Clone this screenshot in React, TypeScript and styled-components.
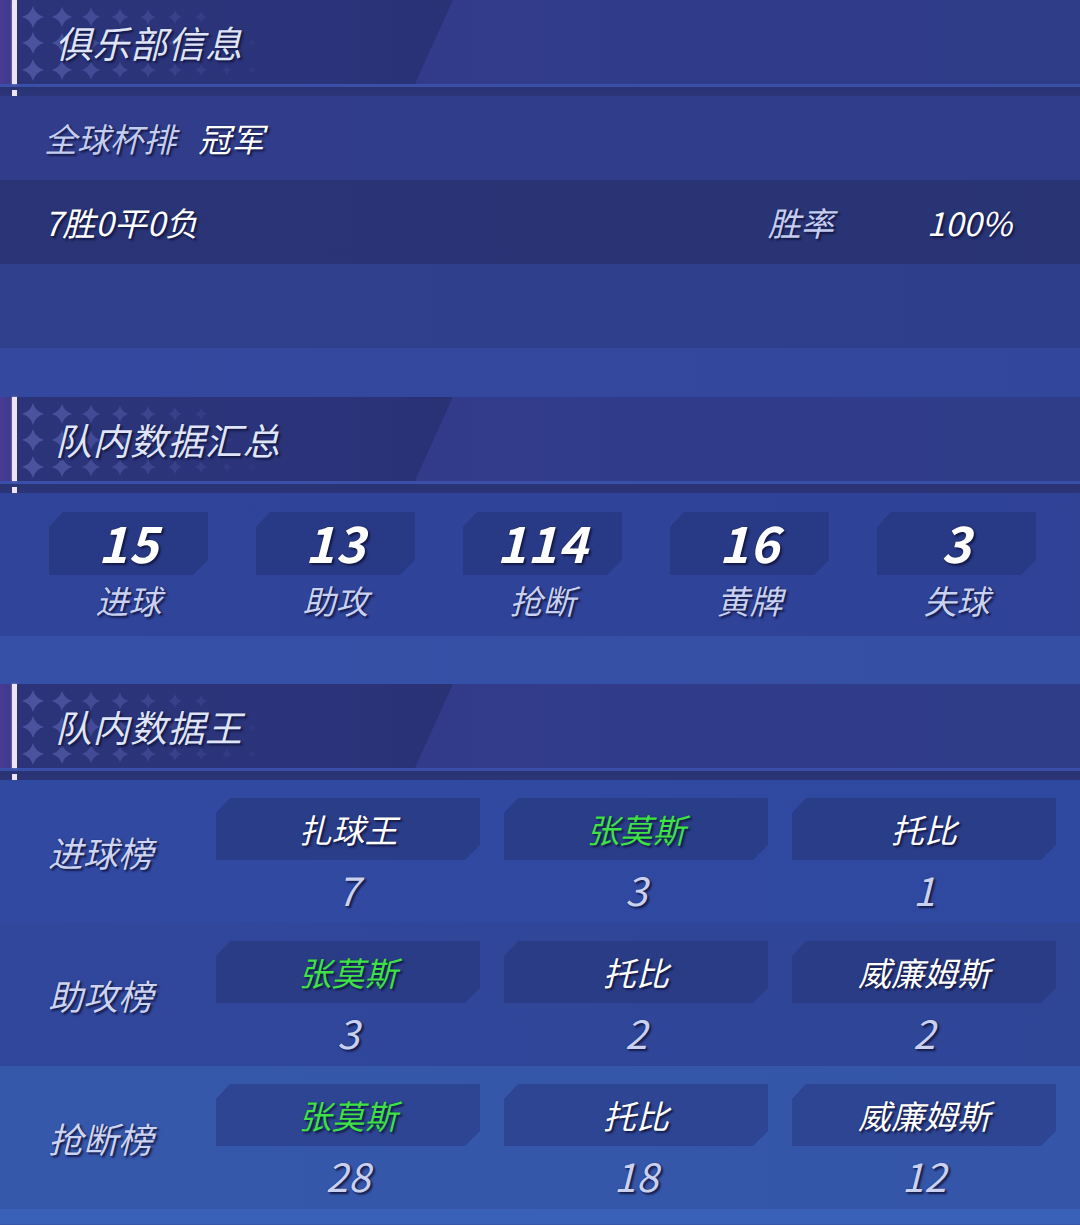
import React from "react";
import styled, { createGlobalStyle } from "styled-components";

const Global = createGlobalStyle`
  html, body {
    margin: 0;
    padding: 0;
    background: #2f3b88;
  }
  * {
    box-sizing: border-box;
  }
`;

const FONT = `"Noto Sans CJK SC", "Noto Sans", sans-serif`;
const SHADOW = `2px 2px 2px rgba(16, 20, 62, 0.85), 0 0 1px rgba(16, 20, 62, 0.9)`;

const Page = styled.div`
  width: 1080px;
  min-height: 1225px;
  background: linear-gradient(180deg, #2f3a87 0%, #30419a 50%, #3657aa 100%);
  font-family: ${FONT};
  font-style: italic;
  overflow: hidden;
`;

const HeadRow = styled.div`
  display: flex;
  height: 84px;
  background: linear-gradient(90deg, #4b3b94 0px, #363a8b 14px, #303c8a 60%, #2f3c88 100%);
`;

const Accent = styled.div`
  margin-left: 12px;
  width: 5px;
  background: #efe3f6;
  box-shadow: 0 0 3px rgba(230, 190, 255, 0.6);
`;

const Banner = styled.div`
  position: relative;
  width: 436px;
  display: flex;
  align-items: center;
  padding-left: 38px;
  background: linear-gradient(90deg, #2c3479 0%, #2b337a 70%, #2a3276 100%);
  clip-path: polygon(0 0, 100% 0, calc(100% - 38px) 100%, 0 100%);
`;

const StarLayer = styled.svg`
  position: absolute;
  left: 0;
  top: 0;
`;

const HeadTitle = styled.h2`
  position: relative;
  margin: 0;
  font-size: 37px;
  font-weight: 400;
  color: #dfe4f8;
  letter-spacing: 0.5px;
  text-shadow: ${SHADOW};
`;

const HeadRule = styled.div`
  display: flex;
  height: 12px;
  background: linear-gradient(180deg, #3a50a8 0, #3a50a8 3px, #2a3374 3px, #2b3577 100%);
`;

const RuleDot = styled.div`
  margin: 6px 0 0 12px;
  width: 5px;
  height: 6px;
  background: #efe3f6;
`;

const InfoRow = styled.div<{ $bg: string }>`
  display: flex;
  align-items: center;
  height: 84px;
  padding: 0 68px 0 44px;
  background: ${(p) => p.$bg};
  font-size: 33px;
`;

const Soft = styled.span`
  color: #c4cdf0;
  text-shadow: ${SHADOW};
`;

const Bright = styled.span<{ $ml?: number }>`
  color: #ffffff;
  margin-left: ${(p) => p.$ml ?? 0}px;
  text-shadow: ${SHADOW};
`;

const RateLabel = styled(Soft)`
  margin-left: auto;
  margin-right: 93px;
`;

const Band = styled.div<{ $h: number; $bg: string }>`
  height: ${(p) => p.$h}px;
  background: ${(p) => p.$bg};
`;

const StatGrid = styled.div`
  display: grid;
  grid-template-columns: repeat(5, 159px);
  column-gap: 48px;
  padding: 19px 0 15px 49px;
  height: 143px;
  background: linear-gradient(90deg, #30449a 0%, #2f4399 60%, #2f4296 100%);
`;

const StatCell = styled.div`
  display: flex;
  flex-direction: column;
  align-items: center;
`;

const StatBox = styled.div`
  width: 100%;
  height: 63px;
  display: flex;
  align-items: center;
  justify-content: center;
  padding-bottom: 6px;
  background: #283985;
  clip-path: polygon(14px 0, 100% 0, 100% calc(100% - 15px), calc(100% - 15px) 100%, 0 100%, 0 15px);
`;

const StatNum = styled.span`
  font-size: 50px;
  font-weight: 700;
  color: #ffffff;
  line-height: 1;
  letter-spacing: 1px;
  text-shadow: ${SHADOW};
`;

const StatLabel = styled.span`
  margin-top: 4px;
  font-size: 33px;
  line-height: 42px;
  color: #c8d1f1;
  text-shadow: ${SHADOW};
`;

const KingRow = styled.div<{ $bg: string }>`
  display: grid;
  grid-template-columns: 192px repeat(3, 264px);
  column-gap: 24px;
  height: 143px;
  background: ${(p) => p.$bg};
`;

const KingLabel = styled.div`
  align-self: center;
  padding-left: 48px;
  font-size: 35px;
  color: #cdd4f2;
  text-shadow: ${SHADOW};
`;

const NameCell = styled.div`
  display: flex;
  flex-direction: column;
  align-items: center;
  padding-top: 18px;
`;

const NameBox = styled.div<{ $bg: string }>`
  width: 100%;
  height: 62px;
  display: flex;
  align-items: center;
  justify-content: center;
  background: ${(p) => p.$bg};
  clip-path: polygon(14px 0, 100% 0, 100% calc(100% - 15px), calc(100% - 15px) 100%, 0 100%, 0 15px);
`;

const Name = styled.span<{ $green?: boolean }>`
  font-size: 33px;
  color: ${(p) => (p.$green ? "#3fe048" : "#ffffff")};
  text-shadow: ${SHADOW};
`;

const Score = styled.span`
  font-size: 40px;
  line-height: 58px;
  color: #c9d0f0;
  text-shadow: ${SHADOW};
`;

const starCols = [16, 45, 74, 103, 131, 158, 184, 210, 235];
const starRows = [17, 43, 70];

const Stars = () => (
  <StarLayer width="300" height="84" viewBox="0 0 300 84">
    {starRows.map((y, r) =>
      starCols.map((x, c) => {
        if (r === 0 && c > 6) return null;
        const s = Math.max(4.5, 11 - c * 0.8);
        const o = Math.max(0.08, 0.5 - c * 0.055);
        const k = s * 0.22;
        return (
          <path
            key={`${r}-${c}`}
            d={`M${x} ${y - s} Q${x + k} ${y - k} ${x + s} ${y} Q${x + k} ${y + k} ${x} ${y + s} Q${x - k} ${y + k} ${x - s} ${y} Q${x - k} ${y - k} ${x} ${y - s} Z`}
            fill="#6a72c4"
            opacity={o}
          />
        );
      })
    )}
  </StarLayer>
);

const SectionHead = ({ title }: { title: string }) => (
  <>
    <HeadRow>
      <Accent />
      <Banner>
        <Stars />
        <HeadTitle>{title}</HeadTitle>
      </Banner>
    </HeadRow>
    <HeadRule>
      <RuleDot />
    </HeadRule>
  </>
);

const stats = [
  { num: "15", label: "进球" },
  { num: "13", label: "助攻" },
  { num: "114", label: "抢断" },
  { num: "16", label: "黄牌" },
  { num: "3", label: "失球" },
];

const kings = [
  {
    label: "进球榜",
    bg: "linear-gradient(90deg, #3149a0 0%, #3049a0 100%)",
    box: "#2a3d89",
    list: [
      { name: "扎球王", val: "7" },
      { name: "张莫斯", val: "3", green: true },
      { name: "托比", val: "1" },
    ],
  },
  {
    label: "助攻榜",
    bg: "linear-gradient(90deg, #30479c 0%, #2f4596 100%)",
    box: "#2a3c86",
    list: [
      { name: "张莫斯", val: "3", green: true },
      { name: "托比", val: "2" },
      { name: "威廉姆斯", val: "2" },
    ],
  },
  {
    label: "抢断榜",
    bg: "linear-gradient(90deg, #3658ab 0%, #3455a8 100%)",
    box: "#2d4592",
    list: [
      { name: "张莫斯", val: "28", green: true },
      { name: "托比", val: "18" },
      { name: "威廉姆斯", val: "12" },
    ],
  },
];

const App = () => {
  return (
    <Page>
      <Global />
      <SectionHead title="俱乐部信息" />
      <InfoRow $bg="linear-gradient(90deg, #313d8b 0%, #2f3d8a 100%)">
        <Soft>全球杯排</Soft>
        <Bright $ml={22}>冠军</Bright>
      </InfoRow>
      <InfoRow $bg="linear-gradient(90deg, #2a3476 0%, #293475 100%)">
        <Bright>7胜0平0负</Bright>
        <RateLabel>胜率</RateLabel>
        <Bright>100%</Bright>
      </InfoRow>
      <InfoRow $bg="linear-gradient(90deg, #30408d 0%, #2e3e8a 100%)" />
      <Band $h={49} $bg="linear-gradient(90deg, #34489f 0%, #32479c 100%)" />

      <SectionHead title="队内数据汇总" />
      <StatGrid>
        {stats.map((s) => (
          <StatCell key={s.label}>
            <StatBox>
              <StatNum>{s.num}</StatNum>
            </StatBox>
            <StatLabel>{s.label}</StatLabel>
          </StatCell>
        ))}
      </StatGrid>
      <Band $h={48} $bg="linear-gradient(90deg, #3550a6 0%, #344fa4 100%)" />

      <SectionHead title="队内数据王" />
      {kings.map((k) => (
        <KingRow key={k.label} $bg={k.bg}>
          <KingLabel>{k.label}</KingLabel>
          {k.list.map((p, i) => (
            <NameCell key={i}>
              <NameBox $bg={k.box}>
                <Name $green={p.green}>{p.name}</Name>
              </NameBox>
              <Score>{p.val}</Score>
            </NameCell>
          ))}
        </KingRow>
      ))}
      <Band $h={15} $bg="#3a61b8" />
    </Page>
  );
};

export default App;
